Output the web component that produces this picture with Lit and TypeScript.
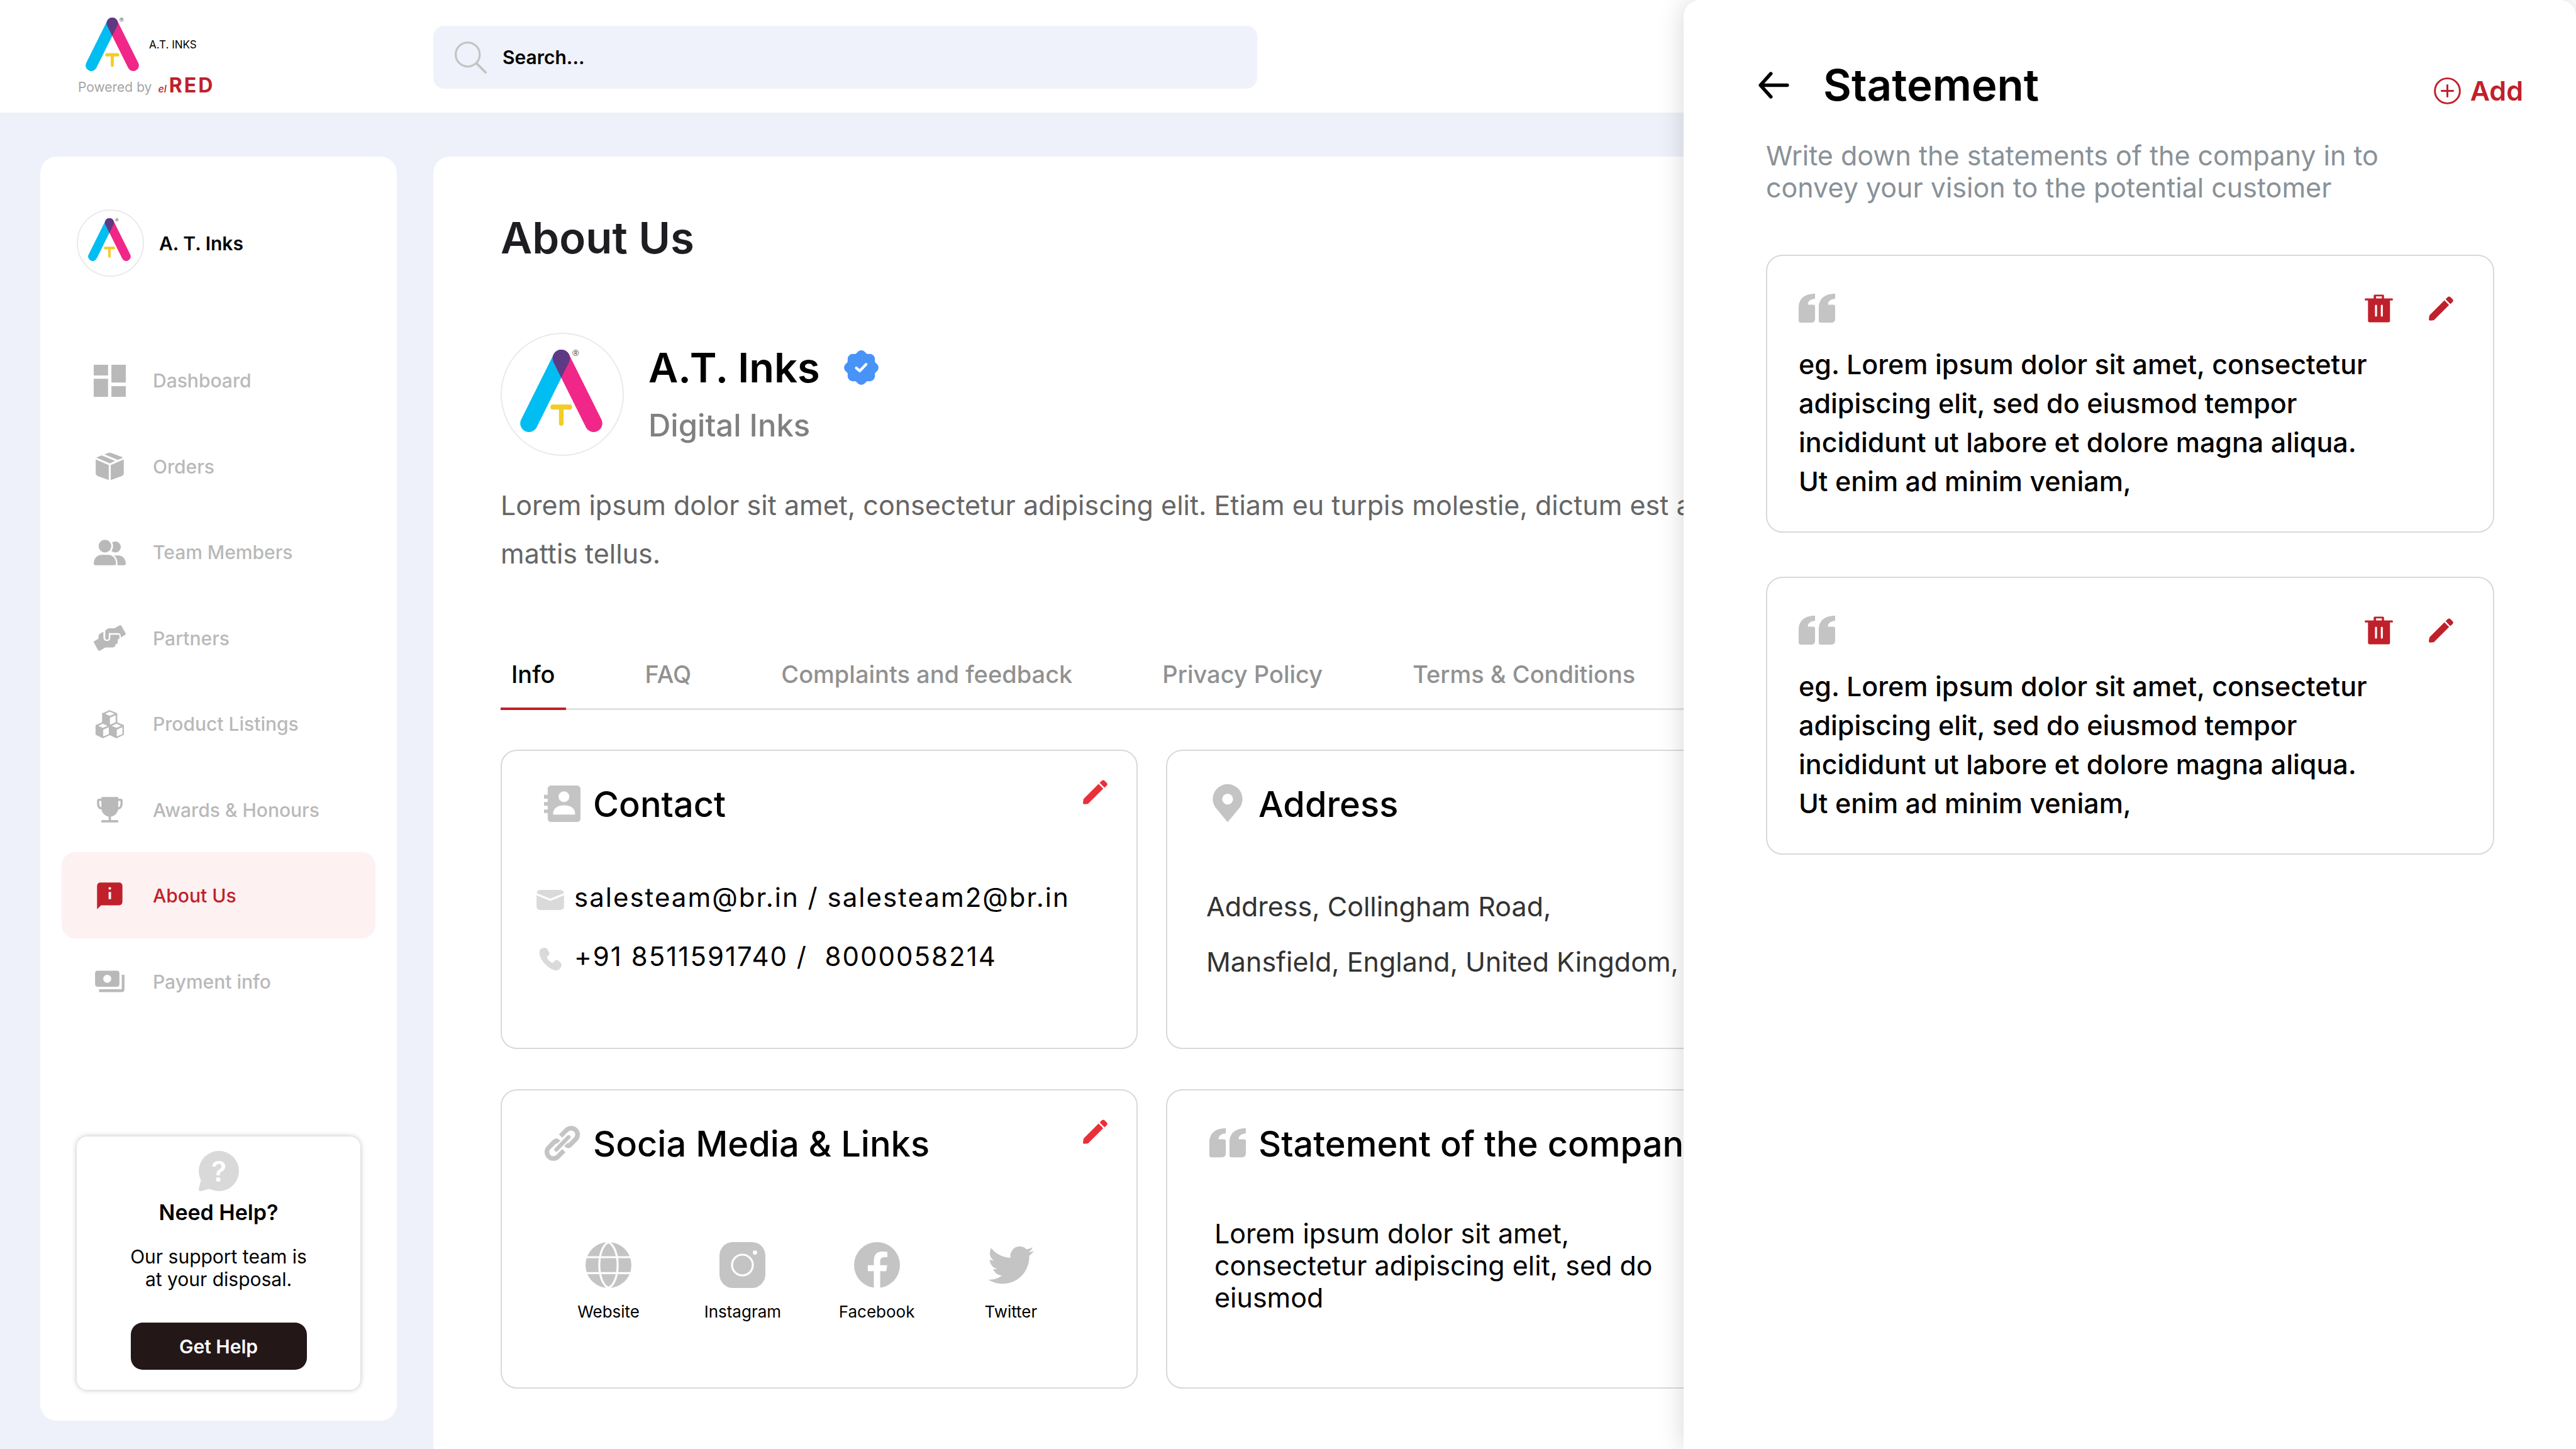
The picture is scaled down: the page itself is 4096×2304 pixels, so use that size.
import { LitElement, html, svg, css } from "lit";
import { customElement, state } from "lit/decorators.js";
import { classMap } from "lit/directives/class-map.js";

const logo = html`
  <svg class="logo" viewBox="0 0 246 247" aria-hidden="true">
    <path d="M123 26 L26 221" stroke="#00bdf2" stroke-width="52" stroke-linecap="round" />
    <path d="M123 26 L220 221" stroke="#f02788" stroke-width="52" stroke-linecap="round" />
    <path d="M123 84 L99.8 37.6 A26 26 0 1 1 146.2 37.6Z" fill="#5e3a84" />
    <path d="M98 172 H148" stroke="#f3cc27" stroke-width="15" stroke-linecap="round" />
    <path d="M123 172 V221" stroke="#f3cc27" stroke-width="14" stroke-linecap="round" />
    <circle cx="166" cy="9.5" r="8.6" fill="none" stroke="#555" stroke-width="1.6" />
    <text x="166" y="14.5" font-size="14" font-weight="500" text-anchor="middle" fill="#444">R</text>
  </svg>
`;

const shapes = {
  dashboard: svg`<path d="M0 0H43V32H0ZM0 42H43V96H0ZM53 0H96V53H53ZM53 64H96V96H53Z"/>`,
  orders: svg`<g transform="translate(6 7)"><path d="M0 20.4L39 37V82L6 70Q0 67 0 62ZM84 20.4L45 37V82L78 70Q84 67 84 62ZM3.500 13.500L18 8L58 25L42 32L3.500 15.500Q2 14.500 3.500 13.500ZM26 5L38.500 .5Q42-.8 45 .5L80.500 13.500Q82 14.500 80.500 15.500L66 21.500Z"/></g>`,
  team: svg`<circle cx="33.7" cy="29" r="19"/><path d="M4 86Q0 86 0 82C0 66 10 55 24 55H43C57 55 67 66 67 82Q67 86 63 86ZM55 18A16.500 16.500 0 1 1 53 43C58 38 60 26 55 18ZM61 57H74C87 57 96 68 96 82Q96 86 92 86H71C72 74 69 64 61 57Z"/>`,
  partners: svg`<path d="M1 62Q-1 60 1.500 58L14.500 49.500V44Q14.500 38 18 35.500L29 29V45Q29 57 39.500 57T50 45V38H74Q77 38 77 41V48Q77 51.500 72 52V61Q72 65.500 65.500 66Q65 76 57 76H35L19 85.500Q15 87 13 84ZM95 33.500Q97 36 94.500 38L81 46.500V43Q81 33.600 72 33.600H45V47Q45 53 39.700 53T34.500 47V25L42 20Q44 19 46 19H62L77 10.500Q81 9 83.500 12Z"/>`,
  products: svg`<g transform="translate(5.5 5.5)" fill-rule="evenodd"><path d="M42.500 0L65 10V38L42.500 46L19.500 38V10ZM42.500 5L28.500 11.500L42.500 17.500L56.500 11.500ZM43 23V46.500L60 37V15.500Z"/><path d="M22 36L45 45.500V74L22 85L0 74V45.500ZM22 41L8 47.500L22 53.500L36 47.500ZM23 59V79L40 72V51.500Z"/><path d="M62.500 36L85 45.500V74L62.500 85L40 74V45.500ZM62.500 41L48.500 47.500L62.500 53.500L76.500 47.500ZM63.500 59V79L80.500 72V51.500Z"/></g>`,
  awards: svg`<g transform="translate(10 10)"><path d="M14 0H62.500Q63.500 0 63.500 1V32C63.500 48 52 59 38.200 59S13 48 13 32V1Q13 0 14 0ZM34.700 57H41.700V69H62Q63.500 69 63.500 71V76H13V71Q13 69 15 69H34.700Z"/><path d="M15 8.300H6Q3.200 8.300 3.200 11V20Q3.200 33 15 34.500M61.500 8.300H70.500Q73.300 8.300 73.300 11V20Q73.300 33 61.500 34.500" fill="none" stroke="currentColor" stroke-width="6.500"/></g>`,
  about: svg`<g transform="translate(10 8)" fill-rule="evenodd"><path d="M11 0H65Q76 0 76 11V57Q76 68 65 68H12L0 80V11Q0 0 11 0ZM34.500 28V50H42V28ZM38.200 13.500A4 4 0 1 0 38.200 21.500A4 4 0 1 0 38.200 13.500Z"/></g>`,
  payment: svg`<g transform="translate(4 16)" fill-rule="evenodd"><path d="M8 0H65Q73 0 73 8V40Q73 48 65 48H8Q0 48 0 40V8Q0 0 8 0ZM36.500 12A12 12 0 1 0 36.500 36A12 12 0 1 0 36.500 12ZM80 12H88V56Q88 64 80 64H12V55.500H80Z"/></g>`,
};

const icon = {
  search: html`<svg class="search-icon" viewBox="0 0 96 96" fill="none" stroke="#c4c4c4" stroke-linecap="round" aria-hidden="true"><circle cx="39" cy="39" r="36" stroke-width="6" /><path d="M66 66L92.500 92.500" stroke-width="7" /></svg>`,
  verified: html`<svg class="verified" viewBox="0 0 104 104" fill="#4893f7" role="img" aria-label="Verified"><rect x="11" y="11" width="82" height="82" rx="15" /><rect x="11" y="11" width="82" height="82" rx="15" transform="rotate(45 52 52)" /><path d="M37 53L47.500 62L66.500 42" fill="none" stroke="#fff" stroke-width="8" stroke-linecap="round" stroke-linejoin="round" /></svg>`,
  help: html`<svg class="help-icon" viewBox="0 0 120 120" fill="#d9d9d9" aria-hidden="true"><circle cx="60" cy="60" r="60" /><path d="M7 86L0 113Q-.5 120 6 120L36 112L60 60Z" /><text x="60" y="91" font-size="84" font-weight="600" text-anchor="middle" fill="#fff">?</text></svg>`,
  contact: html`<svg class="head-icon" viewBox="0 0 108 108" fill="#c4c4c4" aria-hidden="true"><rect x="11" width="97" height="108" rx="10" /><path d="M0 27.500H14V39H0ZM0 49H14V60H0ZM0 71H14V81.500H0Z" /><circle cx="59" cy="33" r="16" fill="#fff" /><path d="M27 86V82C27 67 42 58.500 59.500 58.500S92 67 92 82V86Z" fill="#fff" /></svg>`,
  pin: html`<svg class="head-icon" viewBox="0 0 108 112" fill="#c4c4c4" aria-hidden="true"><path fill-rule="evenodd" d="M54 112L18 69A44 44 0 1 1 90 69ZM54 28A16 16 0 1 0 54 60A16 16 0 1 0 54 28Z" /></svg>`,
  link: html`<svg class="head-icon" viewBox="0 0 110 110" fill="none" stroke="#c4c4c4" stroke-width="14" aria-hidden="true"><path d="M50 33L69 14A19.500 19.500 0 0 1 96.500 41.500L77.500 60.500Q72 65 66 58.500M60 77L41 96A19.500 19.500 0 0 1 13.500 68.500L32.500 49.500Q38 45 44 51.500" /><path d="M37 74L74 36" stroke-width="12" stroke-linecap="round" /></svg>`,
  quote: html`<svg class="quote-icon" viewBox="0 0 108 86" fill="#c4c4c4" aria-hidden="true"><path d="M48.500 0V15Q27 17 27 32.500H43Q48.500 32.500 48.500 38V74Q48.500 86 36 86H6Q0 86 0 80V42C0 16 16 0 48.500 0ZM108 0V15Q86.500 17 86.500 32.500H102.500Q108 32.500 108 38V74Q108 86 95.500 86H65.500Q59.500 86 59.500 80V42C59.500 16 75.500 0 108 0Z" /></svg>`,
  mail: html`<svg class="mail-icon" viewBox="0 0 82 60" aria-hidden="true"><rect width="82" height="60" rx="11" fill="#dadada" /><path d="M-2 12L41 29.500L84 12" fill="none" stroke="#fff" stroke-width="6" /></svg>`,
  phone: html`<svg class="phone-icon" viewBox="0 0 68 68" fill="#dadada" aria-hidden="true"><path d="M5 4Q10 0 17 0Q22 0 24 3L31 14Q33 18 29 22L25 27Q23 29 25 32Q32 43 41 45Q43 45 44 43L49 38Q53 36 57 38L66 46Q69 49 67 55Q64 64 57 67Q50 69 42 66Q22 58 8 36Q-4 14 5 4Z" /></svg>`,
  pencil: html`<svg class="pencil-icon" viewBox="0 0 74 73" fill="currentColor" aria-hidden="true"><path d="M47 12L61 26L16 71Q15 72 13 72L4 73Q0 73 0 69L1.500 59Q2 57 3 56ZM50.500 8.500L57 2Q61-1.500 65 2L72 9Q75 12.500 72 16.500L65 23Z" /></svg>`,
  trash: html`<svg class="trash-icon" viewBox="0 0 85 83" fill="currentColor" aria-hidden="true"><path fill-rule="evenodd" d="M27 11.500V3Q27 0 30 0H55Q58 0 58 3V11.500H82Q85 11.500 85 14.500T82 17.600H76V79Q76 83 72 83H14Q10 83 10 79V17.600H3Q0 17.600 0 14.500T3 11.500ZM34 5V11.500H51.500V5ZM31 33V63Q31 66 34 66T37 63V33Q37 30 34 30T31 33ZM48.500 33V63Q48.500 66 51.500 66T54.500 63V33Q54.500 30 51.500 30T48.500 33Z" /></svg>`,
  back: html`<svg class="back-icon" viewBox="0 0 92 80" fill="none" stroke="#000" stroke-width="10.500" stroke-linecap="round" stroke-linejoin="round" aria-hidden="true"><path d="M37 5.500L6 40L37 74.500M8 40H86" /></svg>`,
  plus: html`<svg class="plus-icon" viewBox="0 0 80 80" fill="none" stroke="currentColor" stroke-width="5.500" stroke-linecap="round" aria-hidden="true"><circle cx="40" cy="40" r="37" /><path d="M23 40H57M40 23V57" /></svg>`,
};

const socialShapes = {
  website: svg`<circle cx="68.5" cy="68.5" r="68.5"/><path d="M0 45H137M0 92.500H137M68.500 0C32 18 32 119 68.500 137C105 119 105 18 68.500 0Z" fill="none" stroke="#fff" stroke-width="6"/>`,
  instagram: svg`<rect width="137" height="137" rx="40"/><circle cx="68.500" cy="68.500" r="31" fill="none" stroke="#fff" stroke-width="6"/><circle cx="106" cy="31" r="6.300" fill="#fff"/>`,
  facebook: svg`<circle cx="68.500" cy="68.500" r="68.500"/><path d="M59 138V87H41V69H59V56Q59 28 85 28Q92 28 99.500 29.500V45H91Q78 45 78 57V69H99L96 87H78V138Z" fill="#fff"/>`,
  twitter: svg`<path transform="scale(5.708)" d="M23.953 4.570a10 10 0 01-2.825.775 4.958 4.958 0 002.163-2.723c-.951.555-2.005.959-3.127 1.184a4.920 4.920 0 00-8.384 4.482C7.690 8.095 4.067 6.130 1.640 3.162a4.822 4.822 0 00-.666 2.475c0 1.710.870 3.213 2.188 4.096a4.904 4.904 0 01-2.228-.616v.060a4.923 4.923 0 003.946 4.827 4.996 4.996 0 01-2.212.085 4.936 4.936 0 004.604 3.417 9.867 9.867 0 01-6.102 2.105c-.390 0-.779-.023-1.170-.067a13.995 13.995 0 007.557 2.209c9.053 0 13.998-7.496 13.998-13.985 0-.210 0-.420-.015-.630A9.935 9.935 0 0024 4.590z"/>`,
};

const navItems = [
  { label: "Dashboard", shape: shapes.dashboard },
  { label: "Orders", shape: shapes.orders },
  { label: "Team Members", shape: shapes.team },
  { label: "Partners", shape: shapes.partners },
  { label: "Product Listings", shape: shapes.products },
  { label: "Awards & Honours", shape: shapes.awards },
  { label: "About Us", shape: shapes.about },
  { label: "Payment info", shape: shapes.payment },
];

const tabs = ["Info", "FAQ", "Complaints and feedback", "Privacy Policy", "Terms & Conditions"];

const socials = [
  { label: "Website", shape: socialShapes.website },
  { label: "Instagram", shape: socialShapes.instagram },
  { label: "Facebook", shape: socialShapes.facebook },
  { label: "Twitter", shape: socialShapes.twitter },
];

const quoteText =
  "eg. Lorem ipsum dolor sit amet, consectetur adipiscing elit, sed do eiusmod tempor incididunt ut labore et dolore magna aliqua. Ut enim ad minim veniam,";

@customElement("app-root")
export class AppRoot extends LitElement {
  @state() private page = "About Us";
  @state() private tab = "Info";
  @state() private statements = [quoteText, quoteText];

  static styles = css`
    :host {
      display: flex;
      flex-direction: column;
      position: relative;
      min-height: 100vh;
      overflow: hidden;
      background: #eef1fa;
      color: #000;
      font-family: Inter, "Liberation Sans", sans-serif;
      font-size: 43px;
    }
    * {
      box-sizing: border-box;
    }
    h1, h2, h3, p, ul, address {
      margin: 0;
      padding: 0;
      font-style: normal;
      list-style: none;
    }
    svg {
      display: block;
      flex: none;
    }
    button {
      padding: 0;
      border: 0;
      background: none;
      color: inherit;
      font: inherit;
      cursor: pointer;
    }
    a {
      color: inherit;
      text-decoration: none;
    }

    .topbar {
      display: flex;
      align-items: flex-start;
      height: 179px;
      padding: 0 64px;
      background: #fff;
    }
    .brand {
      width: 567px;
      margin-right: 58px;
      padding: 28px 0 0 60px;
    }
    .brand-top {
      display: flex;
      align-items: center;
      gap: 16px;
      padding-left: 12px;
      font-size: 17px;
    }
    .brand-top .logo {
      width: 85px;
      height: 85px;
    }
    .powered {
      display: flex;
      align-items: center;
      gap: 10px;
      margin-top: 3px;
      color: #a5a5a5;
      font-size: 21px;
      line-height: 40px;
    }
    .powered-brand {
      color: #c0202b;
      font-size: 32px;
      font-weight: 700;
      letter-spacing: 3px;
    }
    .powered-el {
      margin-right: 4px;
      font-size: 16px;
      font-style: italic;
      font-weight: 500;
      letter-spacing: 0;
    }
    .search {
      display: flex;
      align-items: center;
      gap: 25px;
      width: 1310px;
      height: 100px;
      margin-top: 41px;
      padding: 0 34px;
      border-radius: 17px;
      background: #eff2fa;
    }
    .search-icon {
      width: 51px;
      height: 51px;
    }
    .search-input {
      flex: 1;
      min-width: 0;
      padding: 0;
      border: 0;
      outline: 0;
      background: none;
      color: #000;
      font: 600 30px/36px Inter, sans-serif;
    }
    .search-input::placeholder {
      color: #000;
      opacity: 1;
    }

    .body {
      display: flex;
      flex: 1;
      gap: 58px;
      padding: 70px 64px 0;
    }
    .sidebar {
      display: flex;
      flex: none;
      flex-direction: column;
      width: 567px;
      margin-bottom: 45px;
      padding: 84px 34px 49px;
      border-radius: 26px;
      background: #fff;
    }
    .user {
      display: flex;
      align-items: center;
      gap: 24px;
      padding-left: 24px;
      font-size: 30px;
      font-weight: 600;
    }
    .avatar {
      display: grid;
      flex: none;
      place-content: center;
      width: 107px;
      height: 107px;
      border: 2px solid #eaeaea;
      border-radius: 50%;
      background: #fff;
    }
    .avatar .logo {
      width: 68px;
      height: 68px;
      margin: 0 3px 11px 0;
    }
    .nav {
      display: grid;
      grid-auto-rows: 1fr;
      height: 1092px;
      margin-top: 96px;
    }
    .nav-item {
      display: flex;
      align-items: center;
      gap: 43px;
      padding: 2px 0 0 51px;
      border-radius: 21px;
      color: #b9b9b9;
      font-size: 30px;
      font-weight: 500;
    }
    .nav-item.active {
      background: #fef1f1;
      color: #c0202b;
    }
    .nav-icon {
      width: 51px;
      height: 51px;
      fill: currentColor;
    }
    .help {
      display: flex;
      flex-direction: column;
      align-items: center;
      margin: auto 24px 0;
      padding: 23px 0 32px;
      border-radius: 17px;
      box-shadow: 0 0 9px rgba(0, 0, 0, 0.25);
      text-align: center;
    }
    .help-icon {
      width: 64px;
      height: 64px;
    }
    .help-title {
      margin-top: 13px;
      font-size: 34px;
      font-weight: 600;
      line-height: 41px;
    }
    .help-text {
      max-width: 300px;
      margin-top: 32px;
      font-size: 30px;
      line-height: 36px;
    }
    .help-button {
      width: 280px;
      height: 75px;
      margin-top: 51px;
      border-radius: 19px;
      background: #231718;
      color: #fff;
      font-size: 30px;
      font-weight: 600;
    }

    .main {
      flex: 1;
      min-width: 0;
      padding: 88px 107px 64px;
      border-radius: 26px 26px 0 0;
      background: #fff;
    }
    .page-title {
      color: #1e1d22;
      font-size: 69px;
      font-weight: 600;
      line-height: 82px;
    }
    .profile {
      display: flex;
      align-items: center;
      gap: 39px;
      margin-top: 110px;
    }
    .avatar.large {
      width: 196px;
      height: 196px;
    }
    .avatar.large .logo {
      width: 131px;
      height: 131px;
    }
    .profile-text {
      padding-bottom: 4px;
    }
    .profile-name {
      display: flex;
      align-items: center;
      gap: 38px;
      font-size: 65px;
      font-weight: 600;
      line-height: 80px;
    }
    .verified {
      width: 55px;
      height: 55px;
    }
    .profile-kind {
      margin-top: 23px;
      color: #808080;
      font-size: 49px;
      font-weight: 500;
      line-height: 58px;
    }
    .intro {
      max-width: 1950px;
      margin-top: 40px;
      color: #666;
      font-size: 43px;
      line-height: 77px;
    }
    .tabs {
      display: flex;
      gap: 109px;
      margin-top: 130px;
      box-shadow: inset 0 -3px #e3e3e3;
    }
    .tab {
      padding: 0 17px 30px;
      border-bottom: 4px solid transparent;
      color: #919191;
      font-size: 38px;
      font-weight: 500;
      line-height: 46px;
      white-space: nowrap;
    }
    .tab.active {
      border-bottom-color: #c0202b;
      color: #000;
    }
    .cards {
      display: grid;
      grid-template-columns: repeat(3, 1fr);
      gap: 64px 45px;
      margin-top: 63px;
    }
    .card {
      position: relative;
      min-height: 476px;
      padding: 52px 55px;
      border: 2px solid #d9d9d9;
      border-radius: 26px;
      background: #fff;
    }
    .card.first {
      grid-column: 1;
    }
    .card-head {
      display: flex;
      align-items: center;
      gap: 20px;
      padding-left: 12px;
      font-size: 56px;
      font-weight: 500;
      line-height: 66px;
      white-space: nowrap;
    }
    .card-title {
      font: inherit;
    }
    .head-icon,
    .quote-icon {
      width: 58px;
    }
    .card .card-head svg {
      margin-bottom: 3px;
    }
    .edit {
      position: absolute;
      top: 46px;
      right: 46px;
      color: #e92f38;
    }
    .pencil-icon {
      width: 39px;
      height: 39px;
    }
    .contact-list {
      display: grid;
      gap: 43px;
      margin-top: 89px;
      font-size: 42px;
      line-height: 51px;
    }
    .contact-row {
      display: grid;
      grid-template-columns: 44px 1fr;
      align-items: center;
      gap: 16px;
      letter-spacing: 2px;
      white-space: pre;
    }
    .contact-row svg {
      justify-self: center;
      margin-top: 9px;
    }
    .mail-icon {
      width: 44px;
      height: 32px;
    }
    .phone-icon {
      width: 36px;
      height: 36px;
    }
    .address {
      margin-top: 85px;
      padding-left: 7px;
      color: #333;
      line-height: 88px;
      white-space: nowrap;
    }
    .socials {
      display: grid;
      grid-template-columns: repeat(4, 1fr);
      max-width: 853px;
      margin: 123px 0 0 8px;
    }
    .social {
      display: grid;
      justify-items: center;
      gap: 22px;
      font-size: 26px;
      line-height: 32px;
    }
    .social-icon {
      width: 73px;
      height: 73px;
      fill: #c4c4c4;
    }
    .company-statement {
      max-width: 740px;
      margin-top: 84px;
      padding-left: 20px;
      line-height: 51px;
    }

    .panel {
      position: absolute;
      top: 0;
      right: 0;
      bottom: 0;
      width: 1419px;
      padding: 94px 0 0;
      border-radius: 26px 26px 0 0;
      background: #fff;
      box-shadow: 0 0 43px rgba(0, 0, 0, 0.16);
    }
    .panel-head {
      display: flex;
      align-items: flex-end;
      padding: 0 84px 0 119px;
    }
    .panel-title {
      display: flex;
      flex: 1;
      align-items: center;
      gap: 54px;
      font-size: 69px;
      font-weight: 600;
      line-height: 82px;
    }
    .back-icon {
      width: 49px;
      height: 43px;
    }
    .add {
      display: flex;
      align-items: center;
      gap: 15px;
      color: #c0202b;
      font-weight: 600;
      line-height: 64px;
    }
    .plus-icon {
      width: 43px;
      height: 43px;
    }
    .panel-body {
      padding: 46px 130px 0 131px;
    }
    .panel-text {
      max-width: 1050px;
      color: #899197;
      line-height: 51px;
    }
    .statements {
      display: grid;
      gap: 70px;
      margin-top: 81px;
    }
    .statement {
      padding: 60px 63px 49px 50px;
      border: 2px solid #d9d9d9;
      border-radius: 26px;
    }
    .statement-head {
      display: flex;
      align-items: center;
      gap: 57px;
      height: 46px;
      color: #c0202b;
    }
    .statement-head .quote-icon {
      margin-right: auto;
    }
    .trash-icon {
      width: 45px;
      height: 45px;
    }
    .statement-text {
      max-width: 920px;
      margin-top: 35px;
      font-weight: 500;
      line-height: 62px;
    }
  `;

  private cardHead(mark: unknown, title: string) {
    return html`<div class="card-head">${mark}<h3 class="card-title">${title}</h3></div>`;
  }

  private removeStatement(index: number) {
    this.statements = this.statements.filter((_, i) => i !== index);
  }

  render() {
    return html`
      <header class="topbar">
        <div class="brand">
          <div class="brand-top">${logo}<span>A.T. INKS</span></div>
          <div class="powered">
            <span>Powered by</span>
            <span class="powered-brand"><span class="powered-el">el</span>RED</span>
          </div>
        </div>
        <label class="search">
          ${icon.search}
          <input class="search-input" type="text" placeholder="Search..." aria-label="Search" />
        </label>
      </header>

      <div class="body">
        <aside class="sidebar">
          <div class="user"><span class="avatar">${logo}</span><span>A. T. Inks</span></div>
          <nav class="nav">
            ${navItems.map(
              (item) => html`
                <a
                  href="#"
                  class=${classMap({ "nav-item": true, active: item.label === this.page })}
                  @click=${() => (this.page = item.label)}
                >
                  <svg class="nav-icon" viewBox="0 0 96 96" aria-hidden="true">${item.shape}</svg>
                  <span>${item.label}</span>
                </a>
              `
            )}
          </nav>
          <section class="help">
            ${icon.help}
            <h2 class="help-title">Need Help?</h2>
            <p class="help-text">Our support team is at your disposal.</p>
            <button class="help-button">Get Help</button>
          </section>
        </aside>

        <main class="main">
          <h1 class="page-title">About Us</h1>
          <section class="profile">
            <span class="avatar large">${logo}</span>
            <div class="profile-text">
              <h2 class="profile-name">A.T. Inks ${icon.verified}</h2>
              <p class="profile-kind">Digital Inks</p>
            </div>
          </section>
          <p class="intro">
            Lorem ipsum dolor sit amet, consectetur adipiscing elit. Etiam eu turpis molestie, dictum est a,
            mattis tellus.
          </p>
          <div class="tabs" role="tablist">
            ${tabs.map(
              (name) => html`
                <button
                  role="tab"
                  aria-selected=${name === this.tab}
                  class=${classMap({ tab: true, active: name === this.tab })}
                  @click=${() => (this.tab = name)}
                >${name}</button>
              `
            )}
          </div>
          <div class="cards">
            <section class="card first">
              ${this.cardHead(icon.contact, "Contact")}
              <button class="edit" aria-label="Edit">${icon.pencil}</button>
              <ul class="contact-list">
                <li class="contact-row">${icon.mail}<span>salesteam@br.in / salesteam2@br.in</span></li>
                <li class="contact-row">${icon.phone}<span>+91 8511591740 /  8000058214</span></li>
              </ul>
            </section>
            <section class="card">
              ${this.cardHead(icon.pin, "Address")}
              <address class="address">Address, Collingham Road,<br />Mansfield, England, United Kingdom,</address>
            </section>
            <section class="card first">
              ${this.cardHead(icon.link, "Socia Media & Links")}
              <button class="edit" aria-label="Edit">${icon.pencil}</button>
              <div class="socials">
                ${socials.map(
                  (item) => html`
                    <a class="social" href="#">
                      <svg class="social-icon" viewBox="0 0 137 137" aria-hidden="true">${item.shape}</svg>
                      <span>${item.label}</span>
                    </a>
                  `
                )}
              </div>
            </section>
            <section class="card">
              ${this.cardHead(icon.quote, "Statement of the company")}
              <p class="company-statement">Lorem ipsum dolor sit amet, consectetur adipiscing elit, sed do eiusmod</p>
            </section>
          </div>
        </main>
      </div>

      <aside class="panel">
        <div class="panel-head">
          <h2 class="panel-title"><button aria-label="Back">${icon.back}</button>Statement</h2>
          <button class="add">${icon.plus}Add</button>
        </div>
        <div class="panel-body">
          <p class="panel-text">
            Write down the statements of the company in to convey your vision to the potential customer
          </p>
          <div class="statements">
            ${this.statements.map(
              (text, index) => html`
                <article class="statement">
                  <div class="statement-head">
                    ${icon.quote}
                    <button aria-label="Delete" @click=${() => this.removeStatement(index)}>${icon.trash}</button>
                    <button aria-label="Edit">${icon.pencil}</button>
                  </div>
                  <p class="statement-text">${text}</p>
                </article>
              `
            )}
          </div>
        </div>
      </aside>
    `;
  }
}
